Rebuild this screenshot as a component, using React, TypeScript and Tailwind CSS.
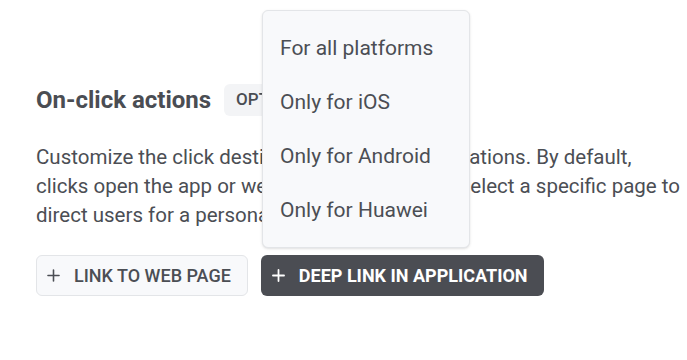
import { Plus } from 'lucide-react'

const platforms = ['For all platforms', 'Only for iOS', 'Only for Android', 'Only for Huawei']

export default function App() {
  return (
    <div className="relative h-[360px] w-full overflow-hidden bg-white pl-9 pt-[84px] font-['Roboto',sans-serif] text-[#4b4e54]">
      <div className="flex h-8 items-center gap-[13px]">
        <h2 className="text-[24px] font-bold text-[#4a4d53]">On-click actions</h2>
        <span className="rounded-md bg-[#f3f4f6] px-3 py-[3px] text-[17px] font-medium text-[#4a4d53]">
          OPTIONAL
        </span>
      </div>

      <p className="mt-[27px] w-[645px] text-[20.5px] leading-[29px]">
        Customize the click destination for these notifications. By default, clicks open the app or
        web page. Alternatively, select a specific page to direct users for a personalized experience.
      </p>

      <div className="mt-[25px] flex gap-[13px]">
        <button className="flex h-[41px] items-center gap-[11px] rounded-md border border-[#e3e5e8] bg-[#f8f9fb] pl-[7px] pr-4 text-[18px] font-medium text-[#4b4e54]">
          <Plus size={19} strokeWidth={2} />
          LINK TO WEB PAGE
        </button>
        <button className="flex h-[41px] items-center gap-[11px] rounded-md bg-[#4b4d53] pl-2 pr-4 text-[18px] font-bold text-white">
          <Plus size={19} strokeWidth={2.25} />
          DEEP LINK IN APPLICATION
        </button>
      </div>

      <div className="absolute left-[262px] top-[10px] w-[208px] rounded-md border border-[#e3e5e8] bg-[#f8f9fb] pb-[9px] pt-[11px] shadow-sm">
        {platforms.map((p) => (
          <div key={p} className="flex h-[54px] items-center px-[17px] text-[21px] text-[#4b4e54]">
            {p}
          </div>
        ))}
      </div>
    </div>
  )
}
